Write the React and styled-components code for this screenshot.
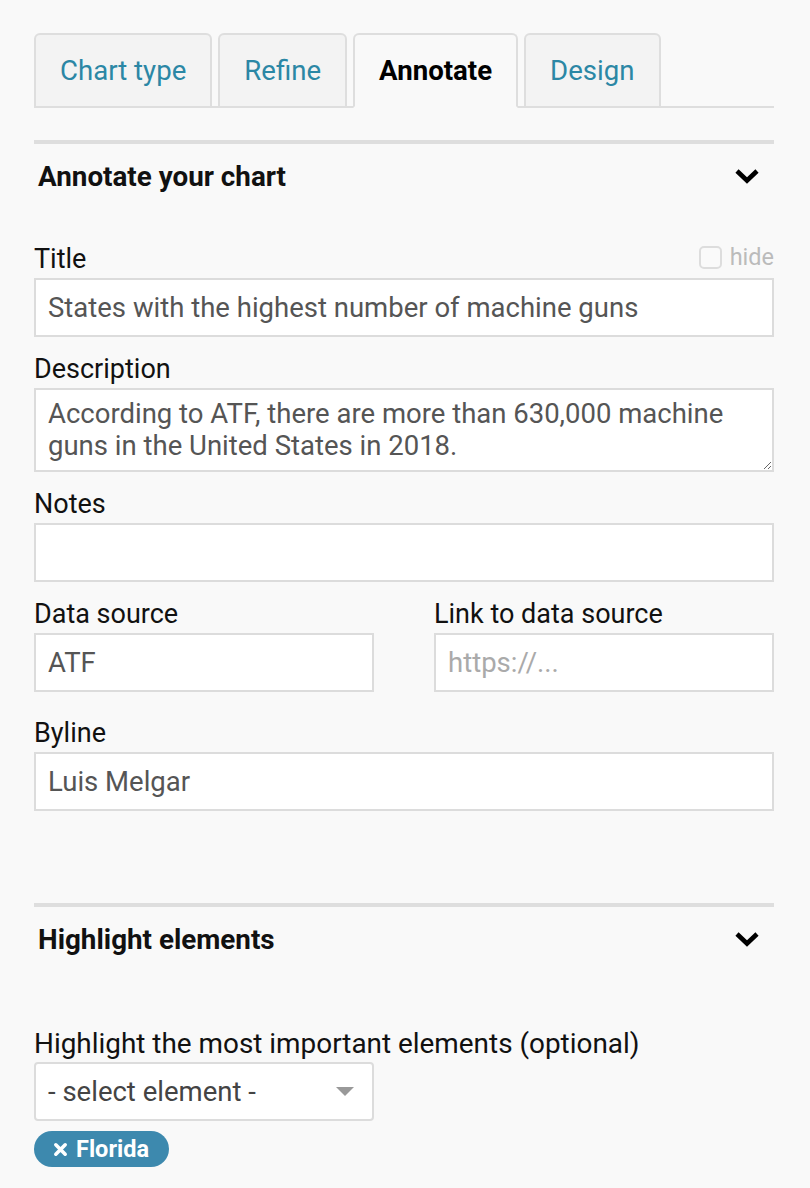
import React from "react";
import styled, { createGlobalStyle } from "styled-components";

const GlobalStyle = createGlobalStyle`
  body {
    margin: 0;
    background: #f9f9f9;
    font-family: Roboto, "Liberation Sans", sans-serif;
    color: #111;
  }
`;

const Page = styled.div`
  width: 740px;
  padding: 33px 36px 24px 34px;
`;

const TabBar = styled.div`
  display: flex;
  gap: 6px;
  border-bottom: 2px solid #dedede;
`;

const Tab = styled.div`
  height: 71px;
  padding: 0 24px;
  margin-bottom: -2px;
  display: flex;
  align-items: center;
  border: 2px solid #dedede;
  border-bottom: ${(p) => (p.active ? "2px solid #f9f9f9" : "2px solid #dedede")};
  border-radius: 6px 6px 0 0;
  background: ${(p) => (p.active ? "#f9f9f9" : "#f3f3f3")};
  color: ${(p) => (p.active ? "#000" : "#2b87a5")};
  font-weight: ${(p) => (p.active ? 700 : 400)};
  font-size: 27.6px;
`;

const Section = styled.section`
  margin-top: ${(p) => p.top || 32}px;
  border-top: 4px solid #dedede;
`;

const SectionHead = styled.div`
  display: flex;
  align-items: center;
  justify-content: space-between;
  height: 64px;
  padding: 0 14px 0 4px;
  font-size: 27.8px;
  font-weight: 700;
`;

const Chevron = () => (
  <svg width="26" height="18" viewBox="0 0 26 18">
    <polyline points="3,4 13,13.5 23,4" fill="none" stroke="#000" strokeWidth="4.6" />
  </svg>
);

const Fields = styled.div`
  padding-top: 36px;
`;

const Field = styled.div`
  margin-bottom: 17px;
`;

const LabelRow = styled.div`
  display: flex;
  justify-content: space-between;
  align-items: center;
  height: 30px;
  margin-bottom: 4px;
`;

const Label = styled.label`
  font-size: ${(p) => p.size || 27}px;
  color: #111;
`;

const Hide = styled.span`
  display: flex;
  align-items: center;
  gap: 8px;
  margin-top: -4px;
  font-size: 23.5px;
  color: #bbb;
`;

const Box = styled.span`
  box-sizing: border-box;
  width: 23px;
  height: 23px;
  border: 2px solid #ddd;
  border-radius: 5px;
  background: #fafafa;
`;

const Input = styled.input`
  box-sizing: border-box;
  display: block;
  width: 100%;
  height: 59px;
  padding: 0 12px;
  border: 2px solid #dcdcdc;
  background: #fff;
  font-family: Roboto, "Liberation Sans", sans-serif;
  font-size: 27.5px;
  color: #555;
  outline: none;
  &::placeholder {
    color: #aaa;
  }
`;

const TextArea = styled.textarea`
  box-sizing: border-box;
  display: block;
  width: 100%;
  height: 84px;
  padding: 8px 12px;
  border: 2px solid #dcdcdc;
  background: #fff;
  font-family: Roboto, "Liberation Sans", sans-serif;
  font-size: 27.5px;
  line-height: 32px;
  color: #555;
  outline: none;
  resize: vertical;
`;

const TwoCol = styled.div`
  display: grid;
  grid-template-columns: 340px 340px;
  justify-content: space-between;
  margin-bottom: 9px;
`;

const SelectBox = styled.div`
  box-sizing: border-box;
  width: 340px;
  height: 59px;
  padding: 0 18px 0 12px;
  display: flex;
  align-items: center;
  justify-content: space-between;
  border: 2px solid #dcdcdc;
  border-radius: 4px;
  background: #fff;
  font-size: 27.5px;
  color: #444;
`;

const Tag = styled.span`
  display: inline-flex;
  align-items: center;
  gap: 8px;
  margin-top: 10px;
  height: 36px;
  padding: 0 20px 0 19px;
  border-radius: 18px;
  background: #3d89ae;
  color: #fff;
  font-weight: 700;
  font-size: 23.5px;
`;

const Highlight = styled.div`
  padding-top: 57px;
`;

export default function App() {
  return (
    <Page>
      <GlobalStyle />
      <TabBar>
        <Tab>Chart type</Tab>
        <Tab>Refine</Tab>
        <Tab active>Annotate</Tab>
        <Tab>Design</Tab>
      </TabBar>

      <Section>
        <SectionHead>
          Annotate your chart
          <Chevron />
        </SectionHead>
        <Fields>
          <Field>
            <LabelRow>
              <Label>Title</Label>
              <Hide>
                <Box />
                hide
              </Hide>
            </LabelRow>
            <Input defaultValue="States with the highest number of machine guns" />
          </Field>
          <Field>
            <LabelRow>
              <Label>Description</Label>
            </LabelRow>
            <TextArea defaultValue="According to ATF, there are more than 630,000 machine guns in the United States in 2018." />
          </Field>
          <Field>
            <LabelRow>
              <Label>Notes</Label>
            </LabelRow>
            <Input defaultValue="" />
          </Field>
          <TwoCol>
            <Field>
              <LabelRow>
                <Label>Data source</Label>
              </LabelRow>
              <Input defaultValue="ATF" />
            </Field>
            <Field>
              <LabelRow>
                <Label>Link to data source</Label>
              </LabelRow>
              <Input placeholder="https://..." />
            </Field>
          </TwoCol>
          <Field>
            <LabelRow>
              <Label>Byline</Label>
            </LabelRow>
            <Input defaultValue="Luis Melgar" />
          </Field>
        </Fields>
      </Section>

      <Section top={92}>
        <SectionHead>
          Highlight elements
          <Chevron />
        </SectionHead>
        <Highlight>
          <LabelRow>
            <Label size={27.9}>Highlight the most important elements (optional)</Label>
          </LabelRow>
          <SelectBox>
            - select element -
            <svg width="18" height="9" viewBox="0 0 18 9">
              <polygon points="0,0 18,0 9,9" fill="#999" />
            </svg>
          </SelectBox>
          <Tag>
            <svg width="15" height="15" viewBox="0 0 16 16">
              <path d="M3 3 L13 13 M13 3 L3 13" stroke="#fff" strokeWidth="3.8" strokeLinecap="round" />
            </svg>
            Florida
          </Tag>
        </Highlight>
      </Section>
    </Page>
  );
}
